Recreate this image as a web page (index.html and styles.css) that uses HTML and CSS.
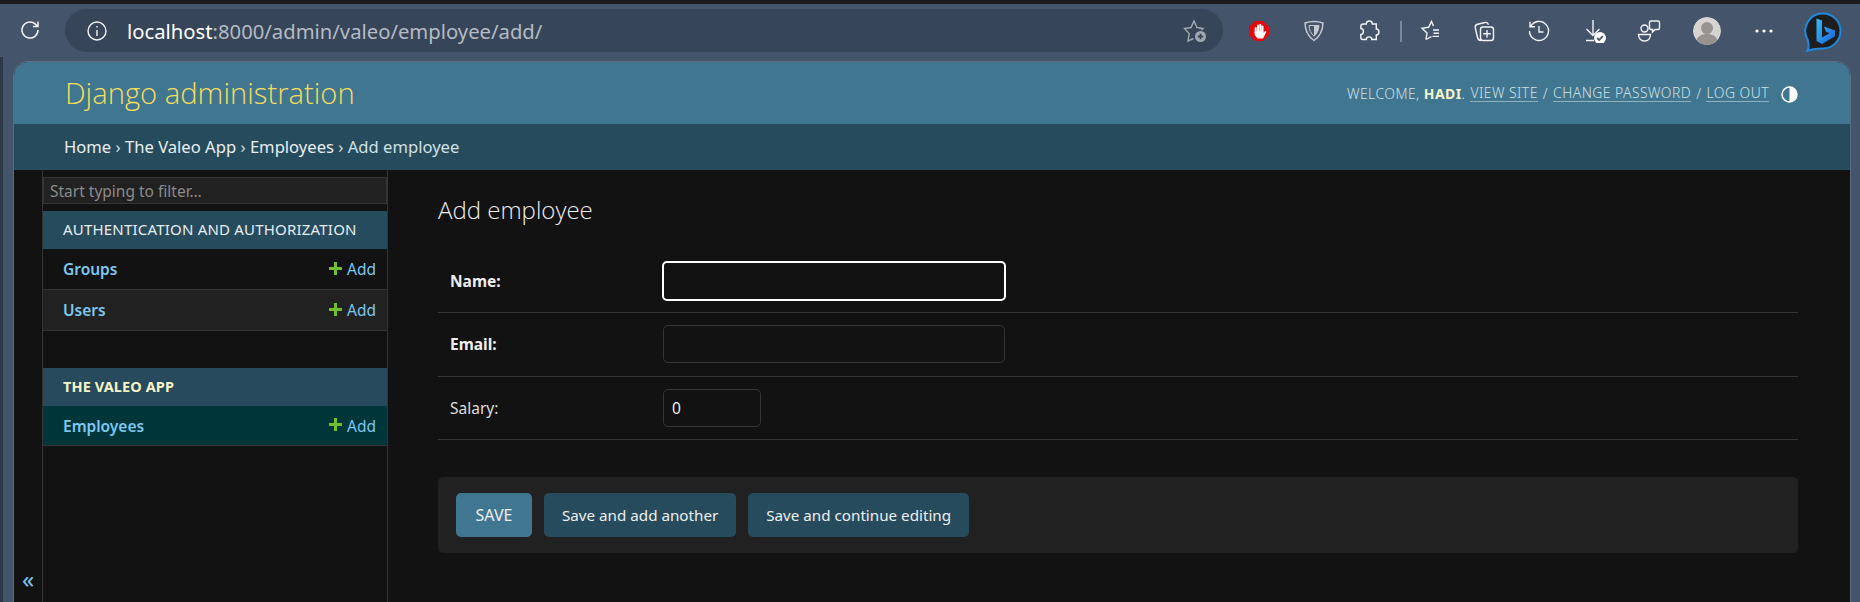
FILE: index.html
```html
<!DOCTYPE html>
<html lang="en">
<head>
<meta charset="utf-8">
<title>Add employee | Django site admin</title>
<link rel="stylesheet" href="styles.css">
</head>
<body>
<div class="topstrip"></div>
<div class="toolbar">
  <svg class="ic reload" viewBox="0 0 24 24"><path d="M20 12a8 8 0 1 1-2.600-5.900L20 8.500M20 3.500v5h-5"/></svg>
  <div class="address">
    <svg class="ic info" viewBox="0 0 24 24"><circle cx="12" cy="12" r="9"/><path d="M12 11v6M12 7v1.600"/></svg>
    <span class="url"><span class="host">localhost</span>:8000/admin/valeo/employee/add/</span>
    <svg class="ic favadd" viewBox="0 0 24 24"><path d="M10.500 19.500 5 22l1.200-7.400L1.500 9.500 8 8.500 11 2l3 6.500 6 1-1.600 1.700"/><circle class="fill-grey" cx="17.500" cy="17.500" r="5.500"/><path class="plus-dark" d="M17.500 14.800v5.400M14.800 17.500h5.400"/></svg>
  </div>
  <div class="exts">
    <svg class="ic" viewBox="0 0 24 24"><path class="stop" d="M8 2h8l6 6v8l-6 6H8l-6-6V8z"/><path class="hand-fingers" d="M8.700 14V9M11 12V6.500M13.300 12V6M15.500 12V7.500"/><path class="hand" d="M7.700 12h8.800v2l1.300-1.700c.8-.8 1.900 0 1.400.9L16 19.500H10.500L7.700 16z"/></svg>
    <svg class="ic shield" viewBox="0 0 24 24"><path d="M12 2.500c3 0 6 .4 9 1.500-.2 7-2.500 13-9 17.500C5.500 17 3.200 11 3 4c3-1.100 6-1.500 9-1.500z"/><path class="shield-in" d="M7 6.500h10c-.3 4.500-1.700 7.800-5 10.700-3.300-2.900-4.700-6.200-5-10.700z"/><path class="shield-dk" d="M12 6.500h5c-.3 4.500-1.700 7.800-5 10.700z"/></svg>
    <svg class="ic" viewBox="0 0 24 24"><path d="M9.500 5.500c0-4 6-4 6 0h4v5c3.500 0 3.500 6 0 6v4.500h-4.500c0-3.500-5.500-3.500-5.500 0H6c-1.500 0-2-.8-2-2v-3c3.500 0 3.500-6 0-6V8c0-1.500 1-2.500 2.500-2.500z" transform="translate(-.2 -.5)"/></svg>
    <span class="sep"></span>
    <svg class="ic" viewBox="0 0 24 24"><path d="M9 20.500l1-6.500-5-4.700 6.600-1L14.500 2.500l2 4.500M9 20.500l5.500-3M16 11h6M16.500 14.200h5.500M15.500 17.400h6.500"/></svg>
    <svg class="ic" viewBox="0 0 24 24"><path d="M9 21.500c-2 0-3-1-3.500-3L3.300 9c-.4-2 .5-3.300 2.300-3.700L13 3.500c2-.4 3 .5 3.500 2.300"/><rect x="8.500" y="8" width="13" height="13.500" rx="2.500"/><path d="M15 11v7.500M11.200 14.700h7.600"/></svg>
    <svg class="ic" viewBox="0 0 24 24"><path d="M3.600 7.500A9.500 9.500 0 1 1 2.500 12M3 2.800v5h5M12 7v6h4.500"/></svg>
    <svg class="ic down" viewBox="0 0 24 24"><path d="M11 1v15M4.500 10l6.500 6.500 6.500-6.500M4 21.500h8"/><circle class="fill-white" cx="18" cy="19" r="6"/><path class="check" d="M15.200 19l2 2 3.600-3.800"/></svg>
    <svg class="ic people" viewBox="0 0 24 24"><circle cx="7.500" cy="9.500" r="3.500"/><path d="M1.500 15.500h12c0 4-2.500 6.500-6 6.500s-6-2.500-6-6.500zM12.500 3.500c0-1 .7-1.500 1.500-1.500h7c1 0 1.500.7 1.500 1.500V9c0 1-.7 1.500-1.500 1.500h-3l-2.500 2.500v-2.500h-1.500c-1 0-1.500-.7-1.500-1.500z"/></svg>
    <svg class="avatar" viewBox="0 0 28 28"><circle class="av-bg" cx="14" cy="14" r="14"/><circle class="av-fg" cx="14" cy="11" r="6"/><path class="av-fg" d="M3.500 23c2-4.500 6-6 10.500-6s8.500 1.500 10.500 6A14 14 0 0 1 14 28a14 14 0 0 1-10.500-5z"/></svg>
    <svg class="dots" viewBox="0 0 20 6"><circle cx="3" cy="3" r="1.600"/><circle cx="10" cy="3" r="1.600"/><circle cx="17" cy="3" r="1.600"/></svg>
    <svg class="bing" viewBox="0 0 38 40"><defs><linearGradient id="bingGrad" x1="0" y1="0" x2="1" y2="1"><stop offset="0" stop-color="#37bdf8"/><stop offset="1" stop-color="#1b62d8"/></linearGradient></defs><path class="bing-bg" d="M19 1.500A17.500 17.500 0 1 1 19 36.500C14 36.500 9 37 3.500 38.500 5.500 35.500 4.800 33 3.800 28A17.500 17.500 0 0 1 19 1.500z"/><path class="bing-b" d="M12.500 6.500l5.500 2v17l7.500-4.300-3.500-1.500-2-5.200 11 3.900v5.800L18 32l-5.500-3z"/></svg>
  </div>
</div>
<div class="page-wrap">
<div class="page">
  <header class="site-header">
    <h1 class="branding">Django administration</h1>
    <div class="user-tools">
      <span>Welcome, <strong>Hadi</strong>.</span>
      <a href="#">View site</a><span>/</span><a href="#">Change password</a><span>/</span><a href="#">Log out</a>
      <svg class="theme" viewBox="0 0 16 16"><circle class="theme-ring" cx="8" cy="8" r="7"/><path class="theme-half" d="M8 1a7 7 0 0 1 0 14z"/></svg>
    </div>
  </header>
  <nav class="breadcrumbs"><a href="#">Home</a> › <a href="#">The Valeo App</a> › <a href="#">Employees</a> › Add employee</nav>
  <div class="main">
    <div class="toggle-col"><span class="toggle">«</span></div>
    <aside class="sidebar">
      <input class="filter" placeholder="Start typing to filter…">
      <div class="caption">Authentication and Authorization</div>
      <div class="row"><a href="#" class="model">Groups</a><a href="#" class="add"><svg class="plus" viewBox="0 0 13 13"><path d="M5 0h3v5h5v3H8v5H5V8H0V5h5z"/></svg>Add</a></div>
      <div class="row alt"><a href="#" class="model">Users</a><a href="#" class="add"><svg class="plus" viewBox="0 0 13 13"><path d="M5 0h3v5h5v3H8v5H5V8H0V5h5z"/></svg>Add</a></div>
      <div class="caption current">The Valeo App</div>
      <div class="row selected"><a href="#" class="model">Employees</a><a href="#" class="add"><svg class="plus" viewBox="0 0 13 13"><path d="M5 0h3v5h5v3H8v5H5V8H0V5h5z"/></svg>Add</a></div>
    </aside>
    <main class="content">
      <h2 class="title">Add employee</h2>
      <form class="form">
        <div class="form-row"><label class="required">Name:</label><input class="field focus" type="text"></div>
        <div class="form-row"><label class="required">Email:</label><input class="field" type="text"></div>
        <div class="form-row"><label>Salary:</label><input class="field small" type="text" value="0"></div>
        <div class="submit-row">
          <button type="button" class="btn default">SAVE</button>
          <button type="button" class="btn">Save and add another</button>
          <button type="button" class="btn">Save and continue editing</button>
        </div>
      </form>
    </main>
  </div>
</div>
</div>
</body>
</html>
```

FILE: styles.css
```css
* { box-sizing: border-box; }
html, body { margin: 0; height: 602px; overflow: hidden; }
body {
  background: #44546a;
  font-family: "Noto Sans", "Open Sans", sans-serif;
  color: #eee;
  display: flex;
  flex-direction: column;
}
a { color: inherit; text-decoration: none; }

.topstrip { height: 4px; background: #1c1c1c; flex: none; }

.toolbar {
  height: 53px;
  flex: none;
  display: flex;
  align-items: flex-start;
  padding: 5px 0 0 18px;
}
.ic { width: 24px; height: 24px; fill: none; stroke: #f2f4f6; stroke-width: 1.4; flex: none; }
.reload { margin-top: 9px; stroke-width: 1.5; }
.address {
  margin-left: 23px;
  width: 1158px;
  height: 43px;
  border-radius: 22px;
  background: #374559;
  display: flex;
  align-items: center;
  padding: 0 16px 0 20px;
}
.info { width: 24px; height: 24px; }
.url { margin-left: 18px; font-size: 20.250px; color: #b4bbc4; white-space: nowrap; flex: 1; }
.host { color: #fff; }
.favadd { stroke: #a2a8b0; }
.fill-grey { fill: #a2a8b0; stroke: none; }
.plus-dark { stroke: #374559; stroke-width: 1.8; }

.exts { display: flex; align-items: center; margin-left: 24px; height: 44px; }
.exts .ic + .ic { margin-left: 31px; }
.stop { fill: #e5090c; stroke: none; }
.hand { fill: #fff; stroke: none; }
.hand-fingers { stroke: #fff; stroke-width: 2; stroke-linecap: round; }
.shield { stroke: #c5cad0; stroke-width: 1.5; }
.shield-in { fill: #44546a; stroke: #c5cad0; stroke-width: 1; }
.shield-dk { fill: #c5cad0; stroke: none; }
.sep { width: 2px; height: 21px; background: #7a8797; margin: 0 15px 0 19px; flex: none; }
.exts .down { margin-left: 34px; }
.exts .people { margin-left: 29px; }
.fill-white { fill: #fff; stroke: none; }
.check { stroke: #44546a; stroke-width: 1.8; }
.avatar { width: 28px; height: 28px; margin-left: 32px; border-radius: 50%; flex: none; }
.av-bg { fill: #d6d4d1; }
.av-fg { fill: #97938e; }
.dots { width: 20px; height: 6px; margin-left: 33px; fill: #fff; flex: none; }
.bing { width: 38px; height: 40px; margin-left: 30px; margin-top: 2px; flex: none; }
.bing-bg { fill: #1e1e1e; stroke: #1d8ae0; stroke-width: 2; }
.bing-b { fill: url(#bingGrad); }

.page-wrap {
  flex: 1;
  min-height: 0;
  display: flex;
  border-left: 3px solid #2f3a48;
  padding: 5px 10px 0 11px;
}
.page {
  flex: 1;
  min-width: 0;
  border-radius: 14px 14px 0 0;
  overflow: hidden;
  background: #121212;
  display: flex;
  flex-direction: column;
  box-shadow: 0 0 0 1px #5c6b80;
}
.site-header {
  height: 62px;
  flex: none;
  background: #417690;
  display: flex;
  align-items: center;
  justify-content: space-between;
  padding: 0 52px 0 51px;
}
.branding { margin: 0; font-size: 29.200px; font-weight: 300; color: #f5dd5d; font-family: "Open Sans", sans-serif; }
.user-tools {
  display: flex;
  align-items: center;
  gap: 5px;
  font-size: 13.900px;
  font-weight: 300;
  text-transform: uppercase;
  letter-spacing: .47px;
  color: #cfe0e4;
}
.user-tools strong { font-weight: 700; color: #f5f5c8; }
.user-tools a { border-bottom: 1px solid #8fb0bf; line-height: 17px; }
.theme { width: 17px; height: 17px; margin-left: 7px; margin-top: 3px; }
.theme-ring { fill: #417690; stroke: #fff; stroke-width: 1.5; }
.theme-half { fill: #fff; }

.breadcrumbs {
  height: 46px;
  flex: none;
  background: #264b5d;
  padding: 0 0 0 50px;
  line-height: 46px;
  font-size: 16.600px;
  color: #cfe0e4;
}
.breadcrumbs a { color: #e8eef1; }

.main { flex: 1; display: flex; min-height: 0; }
.toggle-col {
  width: 29px;
  flex: none;
  border-right: 1px solid #353535;
  position: relative;
}
.toggle { position: absolute; left: 8px; bottom: 9px; font-size: 24px; line-height: 28px; color: #79c5ed; }
.sidebar { width: 345px; flex: none; border-right: 1px solid #353535; padding-top: 7px; display: flex; flex-direction: column; }
.filter {
  width: 100%;
  height: 27px;
  flex: none;
  background: #212121;
  border: 1px solid #353535;
  font: inherit;
  font-size: 15.500px;
  padding: 0 6px;
  color: #eee;
  margin-bottom: 7px;
}
.filter::placeholder { color: #8a8a8a; opacity: 1; }
.caption {
  height: 38px;
  flex: none;
  background: #264b5d;
  padding: 0 20px;
  line-height: 37px;
  text-transform: uppercase;
  font-size: 15px;
  letter-spacing: .2px;
  white-space: nowrap;
  color: #e6edf0;
}
.caption.current { background: #274a5c; font-weight: 700; color: #f5f5c8; margin-top: 37px; letter-spacing: .1px; font-size: 14.500px; }
.row {
  height: 41px;
  flex: none;
  display: flex;
  align-items: center;
  justify-content: space-between;
  padding: 0 11px 0 20px;
  border-bottom: 1px solid #353535;
  font-size: 15.500px;
  color: #7cc8f0;
}
.row.alt { background: #212121; }
.row.selected { background: #00363a; height: 40px; }
.model { font-weight: 600; }
.add { display: flex; align-items: center; }
.plus { width: 13px; height: 13px; fill: #70bf2b; margin-right: 5px; margin-top: -2px; }

.content { flex: 1; padding: 0 52px 0 50px; min-width: 0; }
.title { margin: 25px 0 0; height: 30px; line-height: 30px; font-size: 24px; font-weight: 300; color: #eee; font-family: "Open Sans", sans-serif; }
.form { margin-top: 25px; }
.form-row {
  height: 63.300px;
  display: flex;
  align-items: center;
  border-bottom: 1px solid #353535;
  padding: 0 0 0 12px;
  font-size: 15.500px;
}
label { width: 213px; flex: none; color: #ddd; }
label.required { font-weight: 700; color: #eee; }
.field {
  width: 342px;
  height: 38px;
  background: #121212;
  border: 1px solid #353535;
  border-radius: 5px;
  color: #eee;
  font: inherit;
  padding: 0 8px;
}
.field.focus { border: 2px solid #fff; width: 344px; height: 40px; margin-left: -1px; }
.field.small { width: 98px; }
.submit-row {
  margin-top: 37px;
  height: 76px;
  background: #212121;
  border-radius: 5px;
  padding: 16px 18px;
  display: flex;
  gap: 12px;
}
.btn {
  height: 44px;
  border: 0;
  border-radius: 5px;
  background: #264b5d;
  color: #eee;
  font: inherit;
  font-size: 15.200px;
  padding: 0 18px;
}
.btn.default { background: #417690; width: 76px; padding: 0; font-size: 16px; }
```
